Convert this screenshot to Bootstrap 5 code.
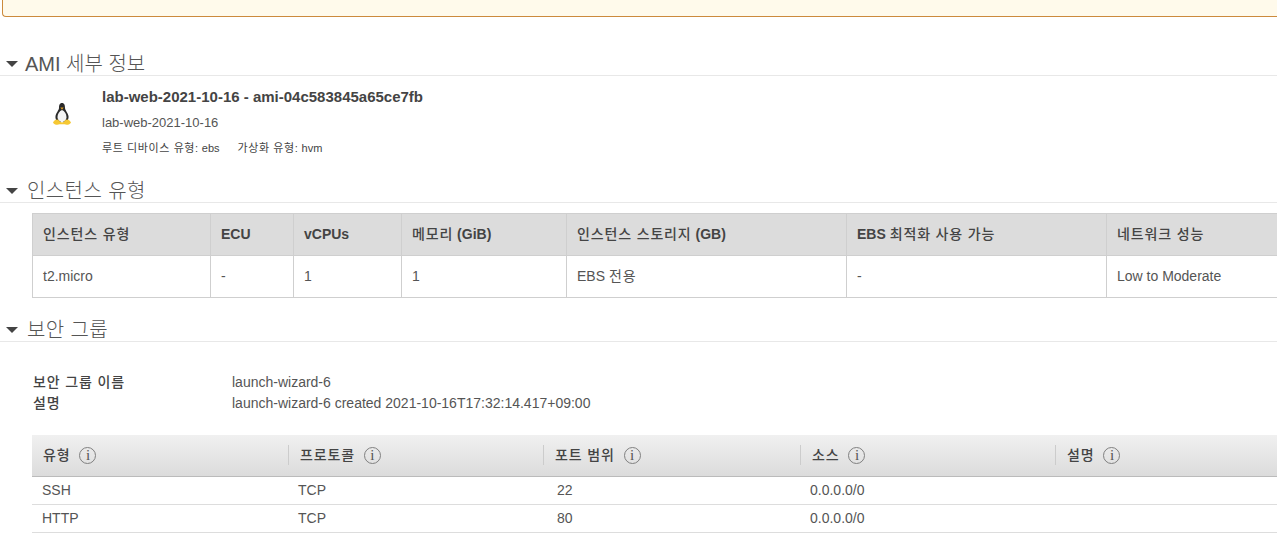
<!DOCTYPE html>
<html lang="ko">

<head>
    <meta charset="UTF-8">
    <meta name="viewport" content="width=device-width, initial-scale=1">
    <link href="https://cdn.jsdelivr.net/npm/bootstrap@5.3.3/dist/css/bootstrap.min.css" rel="stylesheet">
    <script src="https://cdn.jsdelivr.net/npm/bootstrap@5.3.3/dist/js/bootstrap.bundle.min.js"></script>
    <title>AMI 세부 정보</title>
    <style>
        html, body { height: 535px; overflow: hidden; }
        body {
            font-family: "Liberation Sans", "Noto Sans CJK KR", sans-serif;
            font-size: 14px;
            color: #444;
            background: #fff;
        }
        .ko-txt { letter-spacing: .85px; }
        .warn-box {
            height: 17px;
            margin-left: 2px;
            background: #fffaeb;
            border: 1px solid #cc8a3c;
            border-top: 0;
            border-right: 0;
            border-bottom-left-radius: 4px;
        }
        .sect-head {
            height: 26px;
            padding-left: 6px;
            gap: 7px;
            border-bottom: 1px solid #e8e8e8;
            font-size: 20px;
            font-weight: 300;
            line-height: 26px;
            color: #555;
        }
        .sect-head .sect-text { margin-top: 2px; }
        .sect-head .sect-ko { margin-left: 2px; letter-spacing: .4px; }
        .caret-down {
            width: 0;
            height: 0;
            margin-top: 2px;
            border-left: 6px solid transparent;
            border-right: 6px solid transparent;
            border-top: 6px solid #444;
        }
        .head-ami { margin-top: 33px; }
        .ami-body { height: 101px; padding-top: 11px; }
        .ami-icon { width: 102px; padding: 15px 0 0 52px; }
        .ami-title { font-size: 15px; font-weight: 700; color: #444; line-height: 20px; }
        .ami-name { font-size: 13px; line-height: 16px; margin-top: 8px; color: #555; }
        .ami-meta { font-size: 11px; line-height: 14px; margin-top: 10px; color: #444; gap: 18px; }
        .ami-meta .ko-txt { letter-spacing: .6px; }
        .type-wrap { padding: 10px 0 0 32px; height: 113px; }
        .type-table { width: 1245px; table-layout: fixed; border-collapse: collapse; margin: 0; }
        .type-table th, .type-table td {
            border: 1px solid #cfcfcf;
            padding: 0 10px;
            font-size: 14px;
            color: #444;
        }
        .type-table th { height: 42px; background: #dcdcdc; font-weight: 700; }
        .type-table th .ko-txt { font-weight: 500; }
        .type-table td { height: 42px; color: #555; }
        .sg-info { padding: 30px 0 0 33px; height: 93px; font-size: 14px; line-height: 21px; color: #555; }
        .sg-info dt { width: 199px; font-weight: 500; color: #444; }
        .rule-table { margin-left: 32px; width: 1245px; table-layout: fixed; border-collapse: collapse; }
        .rule-table th {
            height: 41px;
            padding: 0;
            font-size: 14px;
            font-weight: 500;
            color: #444;
            background: linear-gradient(#f0f0f0, #dcdcdc);
            border-bottom: 1px solid #bbb;
        }
        .rule-table td { height: 28px; padding: 0 10px; font-size: 14px; color: #555; border-bottom: 1px solid #ddd; }
        .rule-table td:nth-child(3) { padding-left: 14px; }
        .col-label { gap: 9px; height: 20px; padding-left: 11px; }
        .col-sep { border-left: 1px solid #ccc; }
        .info-mark {
            width: 17px;
            height: 17px;
            border: 1px solid #808080;
            border-radius: 50%;
            font-size: 15px;
            font-weight: 400;
            line-height: 15px;
            letter-spacing: 0;
            text-align: center;
            color: #555;
            font-family: "Liberation Serif", serif;
        }
    </style>
</head>

<body>
    <div class="warn-box"></div>

    <!-- AMI -->
    <div class="sect-head head-ami d-flex align-items-center">
        <span class="caret-down"></span><span class="sect-text">AMI 세부 정보</span>
    </div>
    <div class="ami-body d-flex">
        <div class="ami-icon">
            <svg width="20" height="24" viewBox="0 0 20 24">
                <path d="M10 1C7.500 1 7 3.500 7 6C7 8 4 11 3.500 14C3.200 16 4 18 5 20L15 20C16 18 16.800 16 16.500 14C16 11 13 8 13 6C13 3.500 12.500 1 10 1Z" fill="#2a2a2a"/>
                <path d="M10 8C7.500 9 5.500 12 5.500 15C5.500 17.500 7.500 20 10 20C12.500 20 14.500 17.500 14.500 15C14.500 12 12.500 9 10 8Z" fill="#f4f4f4"/>
                <path d="M8.300 5.500L11.700 5.500L10 7.800Z" fill="#e0a020"/>
                <path d="M1 20.500C2.500 17.500 5.500 16.500 7 18.500C8 19.500 9 20.500 10 20.500C11 20.500 12 19.500 13 18.500C14.500 16.500 17.500 17.500 19 20.500C18 22.800 14.500 23.300 12.500 22.300L7.500 22.300C5.500 23.300 2 22.800 1 20.500Z" fill="#f6c833"/>
            </svg>
        </div>
        <div>
            <div class="ami-title">lab-web-2021-10-16 - ami-04c583845a65ce7fb</div>
            <div class="ami-name">lab-web-2021-10-16</div>
            <div class="ami-meta d-flex">
                <span><span class="ko-txt">루트 디바이스 유형:</span> ebs</span>
                <span><span class="ko-txt">가상화 유형:</span> hvm</span>
            </div>
        </div>
    </div>

    <!-- instance type -->
    <div class="sect-head d-flex align-items-center">
        <span class="caret-down"></span><span class="sect-text sect-ko">인스턴스 유형</span>
    </div>
    <div class="type-wrap">
        <table class="type-table">
            <colgroup>
                <col style="width:178px"><col style="width:83px"><col style="width:108px"><col style="width:165px">
                <col style="width:280px"><col style="width:260px"><col style="width:171px">
            </colgroup>
            <thead>
                <tr>
                    <th><span class="ko-txt">인스턴스 유형</span></th><th>ECU</th><th>vCPUs</th>
                    <th><span class="ko-txt">메모리</span> (GiB)</th>
                    <th><span class="ko-txt">인스턴스 스토리지</span> (GB)</th>
                    <th>EBS <span class="ko-txt">최적화 사용 가능</span></th>
                    <th><span class="ko-txt">네트워크 성능</span></th>
                </tr>
            </thead>
            <tbody>
                <tr>
                    <td>t2.micro</td><td>-</td><td>1</td><td>1</td><td>EBS <span class="ko-txt">전용</span></td><td>-</td><td>Low to Moderate</td>
                </tr>
            </tbody>
        </table>
    </div>

    <!-- security group -->
    <div class="sect-head d-flex align-items-center">
        <span class="caret-down"></span><span class="sect-text sect-ko">보안 그룹</span>
    </div>
    <dl class="sg-info m-0">
        <div class="d-flex"><dt><span class="ko-txt">보안 그룹 이름</span></dt><dd class="m-0">launch-wizard-6</dd></div>
        <div class="d-flex"><dt><span class="ko-txt">설명</span></dt><dd class="m-0">launch-wizard-6 created 2021-10-16T17:32:14.417+09:00</dd></div>
    </dl>
    <table class="rule-table">
        <colgroup>
            <col style="width:256px"><col style="width:255px"><col style="width:257px"><col style="width:255px"><col style="width:222px">
        </colgroup>
        <thead>
            <tr>
                <th><div class="col-label d-flex align-items-center"><span class="ko-txt">유형</span> <span class="info-mark">i</span></div></th>
                <th><div class="col-label col-sep d-flex align-items-center"><span class="ko-txt">프로토콜</span> <span class="info-mark">i</span></div></th>
                <th><div class="col-label col-sep d-flex align-items-center"><span class="ko-txt">포트 범위</span> <span class="info-mark">i</span></div></th>
                <th><div class="col-label col-sep d-flex align-items-center"><span class="ko-txt">소스</span> <span class="info-mark">i</span></div></th>
                <th><div class="col-label col-sep d-flex align-items-center"><span class="ko-txt">설명</span> <span class="info-mark">i</span></div></th>
            </tr>
        </thead>
        <tbody>
            <tr><td>SSH</td><td>TCP</td><td>22</td><td>0.0.0.0/0</td><td></td></tr>
            <tr><td>HTTP</td><td>TCP</td><td>80</td><td>0.0.0.0/0</td><td></td></tr>
        </tbody>
    </table>
</body>

</html>
